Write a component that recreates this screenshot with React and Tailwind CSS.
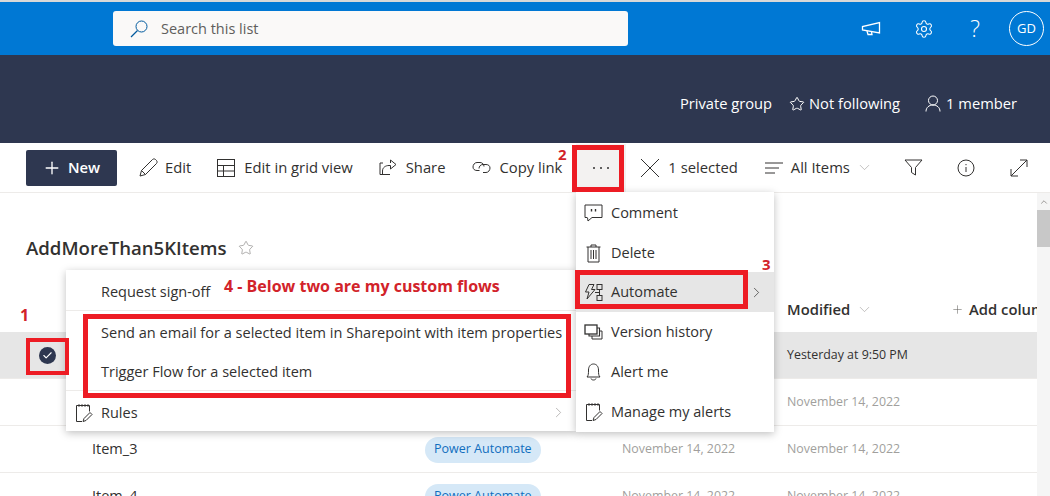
import React from "react";
import { Settings, Star, Plus, ChevronDown, ChevronRight, ChevronUp, Check } from "lucide-react";

// Fabric style line icons, lucide has no close match for these
function Icon({ w, h, className = "", stroke = "#323130", children }) {
  return (
    <svg width={w} height={h} viewBox={`0 0 ${w} ${h}`} fill="none" stroke={stroke} strokeWidth="1" className={`shrink-0 ${className}`}>
      {children}
    </svg>
  );
}

function RulesIcon() {
  return (
    <Icon w={18} h={20}>
      <path d="M7 18.5H1.5V2.5H14.5V8.5" />
      <path d="M4 1V4M7 1V4M10 1V4M13 1V4" strokeWidth="0.8" />
      <path d="M8 18.5L9 15.5L15 9.5L17 11.5L11 17.5Z" />
    </Icon>
  );
}

function AutomateIcon() {
  return (
    <Icon w={19} h={19}>
      <path d="M5 1.5H10L7.5 6.5H11L3 16L5 9H1.5Z" />
      <rect x="13" y="1.5" width="5" height="5" />
      <rect x="13" y="12.5" width="5" height="5" />
      <path d="M15.5 6.5V12.5M11 9.5H15.5" />
    </Icon>
  );
}

function MenuRow({ icon, label, className = "", children }) {
  return (
    <div className={`flex h-10 items-center ${className}`}>
      <span className="flex w-[35px] shrink-0 justify-center">{icon}</span>
      <span className="text-[14.5px] text-[#323130]">{label}</span>
      {children}
    </div>
  );
}

function ListRow({ name, created, modified, selected }) {
  return (
    <div className={`flex h-[47px] shrink-0 items-center border-b border-[#edebe9] pl-[92px] ${selected ? "bg-[#e6e6e6]" : ""}`}>
      <span className="w-[333px] text-[14.5px] text-[#323130]">{name}</span>
      <span className="w-[197px]">
        <span className="inline-flex h-[26px] items-center rounded-full bg-[#d5e8f7] px-[9px] text-[12.5px] text-[#106ebe]">Power Automate</span>
      </span>
      <span className="w-[165px] text-[12.4px] text-[#a19f9d]">{created}</span>
      <span className={`text-[12.4px] ${selected ? "text-[#323130]" : "text-[#a19f9d]"}`}>{modified}</span>
    </div>
  );
}

export default function App() {
  return (
    <div className="relative flex h-[496px] w-[1050px] flex-col overflow-hidden bg-white font-['Open_Sans',sans-serif]">
      {/* suite bar */}
      <div className="flex h-[55px] shrink-0 items-center border-t-2 border-[#d8d8d8] bg-[#0078d4] pl-[113px] pr-[6px]">
        <div className="flex h-[35px] w-[515px] items-center rounded-[3px] bg-[#faf9f8] pl-[17px] text-[14.5px] text-[#605e5c]">
          <Icon w={18} h={18} stroke="#005a9e" className="mr-[13px]">
            <circle cx="11.5" cy="6.5" r="5.5" />
            <path d="M7.5 10.5L1 17" strokeWidth="1.3" />
          </Icon>
          Search this list
        </div>
        <div className="ml-auto flex items-center">
          <Icon w={20} h={16} stroke="white">
            <path d="M18.5 1.5V12L1.5 9V5.5Z" strokeWidth="1.3" />
            <path d="M6 10L7 13.5H11L10.5 11" strokeWidth="1.3" />
          </Icon>
          <Settings size={20} strokeWidth={1.3} color="white" className="ml-[33px]" />
          <span className="ml-[36px] text-[23px] font-light leading-none text-white">?</span>
          <span className="ml-[29px] flex h-[35px] w-[35px] items-center justify-center rounded-full border border-white text-[13px] text-white">GD</span>
        </div>
      </div>

      {/* group header */}
      <div className="flex h-[88px] shrink-0 items-center justify-end bg-[#2e3750] pr-[33px] pt-[9px] text-[14.7px] text-white">
        <span>Private group</span>
        <Star size={16} strokeWidth={1.5} className="ml-[17px] mr-[4px]" />
        <span>Not following</span>
        <Icon w={16} h={17} stroke="white" className="ml-[25px] mr-[5px]">
          <circle cx="8" cy="5.5" r="4.5" />
          <path d="M1 16.5C1 12.5 4 10 8 10S15 12.5 15 16.5" />
        </Icon>
        <span>1 member</span>
      </div>

      {/* command bar */}
      <div className="flex h-[50px] shrink-0 items-center border-b border-[#edebe9] pl-[26px] text-[14.8px] text-[#323130]">
        <button className="flex h-[36px] w-[91px] items-center rounded-[2px] bg-[#2e3750] pl-[16px] font-semibold text-white">
          <Plus size={20} strokeWidth={1.6} className="mr-[6px]" />
          New
        </button>
        <Icon w={19} h={19} className="ml-[22px] mr-[7px]">
          <path d="M1 18L2.5 12.5L13.5 1.5C14.5 0.7 15.5 0.7 16.5 1.5L17.5 2.5C18.3 3.5 18.3 4.5 17.5 5.5L6.5 16.5Z" />
          <path d="M2.5 12.5L6.5 16.5" />
        </Icon>
        <span>Edit</span>
        <Icon w={18} h={18} className="ml-[26px] mr-[9px]">
          <rect x="0.5" y="0.5" width="17" height="17" />
          <path d="M0.5 6.5H17.5M0.5 12H17.5M6.5 6.5V17.5" />
        </Icon>
        <span>Edit in grid view</span>
        <Icon w={18} h={17} className="ml-[26px] mr-[9px]">
          <path d="M11 15.5H1V4H4" />
          <path d="M3.5 15V12C3.5 8.5 6.5 6.5 10 6.5H11.5V10L17 5.5L11.5 1V4" />
        </Icon>
        <span>Share</span>
        <Icon w={19} h={13} className="ml-[27px] mr-[8px]">
          <path d="M7.5 9.5H5C2.5 9.5 1 8 1 6S2.5 1.5 5 1.5H8C10.5 1.5 12 3.5 12 5.5" />
          <path d="M7 7.5C7 5.5 8.5 3.5 11 3.5H14C16.5 3.5 18 5 18 7S16.5 11.5 14 11.5H11" />
        </Icon>
        <span>Copy link</span>
        <span className="ml-[14px] flex h-[48px] w-[50px] items-center justify-center gap-[5px] bg-[#f3f2f1]">
          <span className="h-[2px] w-[2px] rounded-full bg-[#323130]" />
          <span className="h-[2px] w-[2px] rounded-full bg-[#323130]" />
          <span className="h-[2px] w-[2px] rounded-full bg-[#323130]" />
        </span>
        <Icon w={20} h={20} className="ml-[14px] mr-[8px]">
          <path d="M1 1L19 19M19 1L1 19" />
        </Icon>
        <span>1 selected</span>
        <Icon w={19} h={12} className="ml-[27px] mr-[7px]">
          <path d="M0 1H18M0 6H14M0 11H10" />
        </Icon>
        <span>All Items</span>
        <ChevronDown size={17} strokeWidth={0.9} color="#a19f9d" className="ml-[6px]" />
        <Icon w={19} h={17} className="ml-[31px]">
          <path d="M1 1H18L11.5 8.5V16L7.5 13.5V8.5Z" />
        </Icon>
        <Icon w={18} h={18} className="ml-[34px]">
          <circle cx="9" cy="9" r="8" />
          <path d="M9 8V13M9 5V6.2" />
        </Icon>
        <Icon w={18} h={18} className="ml-[35px]">
          <path d="M1 17L17 1M10 1H17V8M1 10V17H8" />
        </Icon>
      </div>

      {/* list area */}
      <div className="flex min-h-0 flex-1">
        <div className="flex min-w-0 flex-1 flex-col">
          <div className="flex items-center pl-[26px] pt-[42px] text-[#323130]">
            <span className="text-[18.6px] font-semibold leading-[26px]">AddMoreThan5KItems</span>
            <Star size={16} strokeWidth={1} color="#8a8886" className="ml-[11px]" />
          </div>
          <div className="flex h-[71px] shrink-0 items-center justify-end pb-[-0px] pt-[26px] text-[14.8px] font-semibold text-[#323130]">
            <span className="flex w-[164px] items-center">
              Modified
              <ChevronDown size={17} strokeWidth={0.9} color="#a19f9d" className="ml-[6px]" />
            </span>
            <span className="flex w-[86px] items-center overflow-hidden whitespace-nowrap">
              <Plus size={13} strokeWidth={1} className="mr-[5px] shrink-0" color="#605e5c" />
              Add column
            </span>
          </div>
          <ListRow name="Item_1" created="Yesterday at 9:50 PM" modified="Yesterday at 9:50 PM" selected />
          <ListRow name="Item_2" created="November 14, 2022" modified="November 14, 2022" />
          <ListRow name="Item_3" created="November 14, 2022" modified="November 14, 2022" />
          <ListRow name="Item_4" created="November 14, 2022" modified="November 14, 2022" />
        </div>
        <div className="w-[13px] shrink-0 bg-[#f5f5f5]">
          <ChevronUp size={10} color="#8a8886" className="mx-auto mt-[4px]" />
          <div className="mt-[3px] h-[37px] bg-[#c8c8c8]" />
        </div>
      </div>

      {/* selected row check */}
      <div className="absolute left-[27px] top-[332px] flex h-[46px] w-[41px] items-center justify-center bg-[#e6e6e6]">
        <span className="flex h-[17px] w-[17px] items-center justify-center rounded-full bg-[#2e3750]">
          <Check size={11} strokeWidth={2.4} color="white" />
        </span>
      </div>

      {/* automate submenu */}
      <div className="absolute left-[66px] top-[270px] w-[510px] bg-white shadow-[0_2px_8px_rgba(0,0,0,0.25)]">
        <div className="flex h-[41px] items-center border-b border-[#edebe9] pl-[35px] pt-[3px] text-[14.5px] text-[#323130]">Request sign-off</div>
        <div className="flex h-[40px] items-center pl-[35px] pt-[3px] text-[14.55px] text-[#323130]">Send an email for a selected item in Sharepoint with item properties</div>
        <div className="flex h-[40px] items-center border-b border-[#edebe9] pl-[35px] pt-[3px] text-[14.5px] text-[#323130]">Trigger Flow for a selected item</div>
        <MenuRow icon={<RulesIcon />} label="Rules" className="pt-[3px]">
          <ChevronRight size={17} strokeWidth={1} color="#a19f9d" className="ml-auto mr-[9px]" />
        </MenuRow>
      </div>

      {/* overflow menu */}
      <div className="absolute left-[576px] top-[192px] w-[198px] bg-white shadow-[0_2px_8px_rgba(0,0,0,0.25)]">
        <MenuRow
          className="pt-[2px]"
          label="Comment"
          icon={
            <Icon w={19} h={18}>
              <path d="M3 13.5H1V1H18V13.5H8L4 17L3.5 13.5" />
              <path d="M7.5 5V7.5M11.5 5V7.5" strokeWidth="1.4" />
            </Icon>
          }
        />
        <MenuRow
          className="pt-[2px]"
          label="Delete"
          icon={
            <Icon w={15} h={19}>
              <path d="M0.5 3H14.5M5 3V1H10V3M2 3V18H13V3" />
              <path d="M5 6V15M7.5 6V15M10 6V15" />
            </Icon>
          }
        />
        <MenuRow icon={<AutomateIcon />} label="Automate" className="bg-[#e6e6e6]">
          <ChevronRight size={17} strokeWidth={1} color="#323130" className="ml-auto mr-[9px]" />
        </MenuRow>
        <MenuRow
          label="Version history"
          icon={
            <Icon w={19} h={16}>
              <rect x="1" y="1" width="12" height="9" strokeWidth="1.3" />
              <path d="M13 4H15.5V12H5V10" strokeWidth="1.1" />
              <path d="M15.5 7H18V15H8V12" />
            </Icon>
          }
        />
        <MenuRow
          label="Alert me"
          icon={
            <Icon w={15} h={18}>
              <path d="M1 14H14C12.5 12.5 12.5 10.5 12.5 7C12.5 3.5 10.5 1 7.5 1S2.5 3.5 2.5 7C2.5 10.5 2.5 12.5 1 14Z" />
              <path d="M5 15.5C5.5 17.5 9.5 17.5 10 15.5" />
            </Icon>
          }
        />
        <MenuRow icon={<RulesIcon />} label="Manage my alerts" />
      </div>

      {/* red annotations drawn over the screenshot */}
      <div className="absolute left-[26px] top-[338px] h-[37px] w-[43px] border-[4px] border-[#ed1c24]" />
      <div className="absolute left-[572px] top-[145px] h-[47px] w-[52px] border-[5px] border-[#ed1c24]" />
      <div className="absolute left-[575px] top-[270px] h-[39px] w-[173px] border-[5px] border-[#ed1c24]" />
      <div className="absolute left-[83px] top-[314px] h-[84px] w-[488px] border-[5px] border-[#ed1c24]" />
      <span className="absolute left-[20px] top-[305px] text-[16px] font-bold leading-5 text-[#d2232a]">1</span>
      <span className="absolute left-[558px] top-[144px] text-[15px] font-bold leading-5 text-[#d2232a]">2</span>
      <span className="absolute left-[762px] top-[254px] text-[15px] font-bold leading-5 text-[#d2232a]">3</span>
      <span className="absolute left-[224px] top-[276px] text-[16px] font-bold leading-5 text-[#d2232a]">4 - Below two are my custom flows</span>
    </div>
  );
}
